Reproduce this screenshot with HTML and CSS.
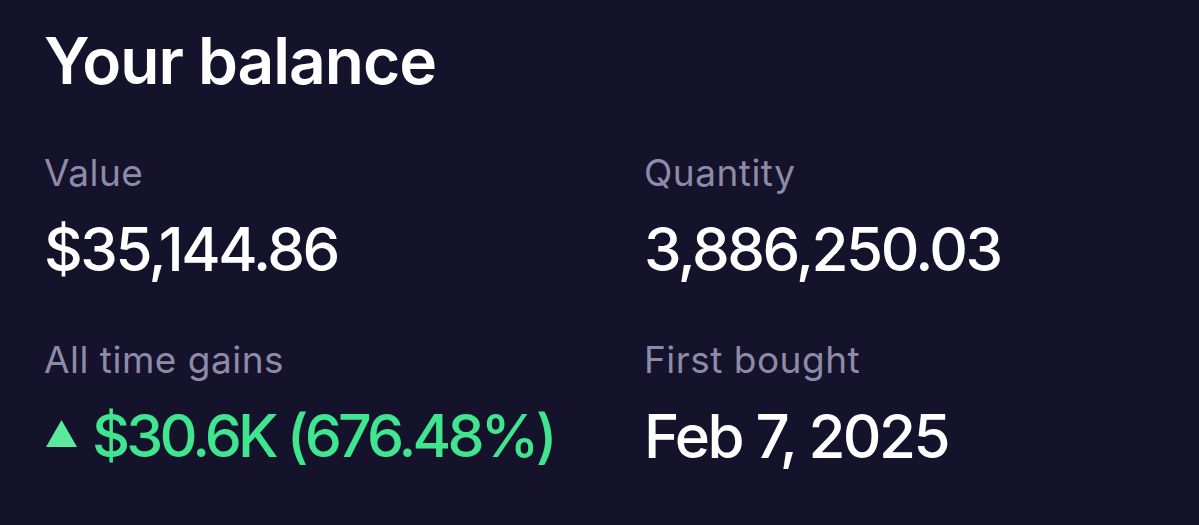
FILE: index.html
```html
<!DOCTYPE html>
<html>
<head>
<meta charset="utf-8">
<link rel="stylesheet" href="styles.css">
</head>
<body>
<main class="card">
  <h1 class="title">Your balance</h1>
  <div class="grid">
    <div class="stat">
      <div class="label">Value</div>
      <div class="value">$35,144.86</div>
    </div>
    <div class="stat">
      <div class="label">Quantity</div>
      <div class="value">3,886,250.03</div>
    </div>
    <div class="stat">
      <div class="label">All time gains</div>
      <div class="value gain"><svg class="tri" viewBox="0 0 31 27" width="31" height="27"><polygon points="15.5,0 31,27 0,27" fill="#5ae99f"/></svg>$30.6K (676.48%)</div>
    </div>
    <div class="stat">
      <div class="label">First bought</div>
      <div class="value">Feb 7, 2025</div>
    </div>
  </div>
</main>
</body>
</html>
```
FILE: styles.css
```css
html, body {
  margin: 0;
  padding: 0;
  background: #15132b;
}
body {
  width: 1199px;
  height: 525px;
  overflow: hidden;
  font-family: Inter, "Liberation Sans", sans-serif;
}
.card {
  padding: 21px 44px 0 44px;
}
.title {
  margin: 0;
  font-size: 64px;
  font-weight: 600;
  color: #ffffff;
  letter-spacing: -1px;
  line-height: 80px;
}
.grid {
  display: grid;
  grid-template-columns: 600px 1fr;
  row-gap: 57px;
  margin-top: 50px;
}
.label {
  font-size: 37px;
  color: #8e8ba8;
  line-height: 44px;
  letter-spacing: 0.5px;
}
.value {
  font-size: 60px;
  font-weight: 500;
  color: #ffffff;
  line-height: 64px;
  margin-top: 22px;
  letter-spacing: -2.5px;
  display: flex;
  align-items: center;
  white-space: nowrap;
}
.gain {
  color: #3fe68f;
  font-size: 59px;
  letter-spacing: -3.8px;
}
.tri {
  flex: none;
  margin: 0 15px 5px 2px;
}
```
